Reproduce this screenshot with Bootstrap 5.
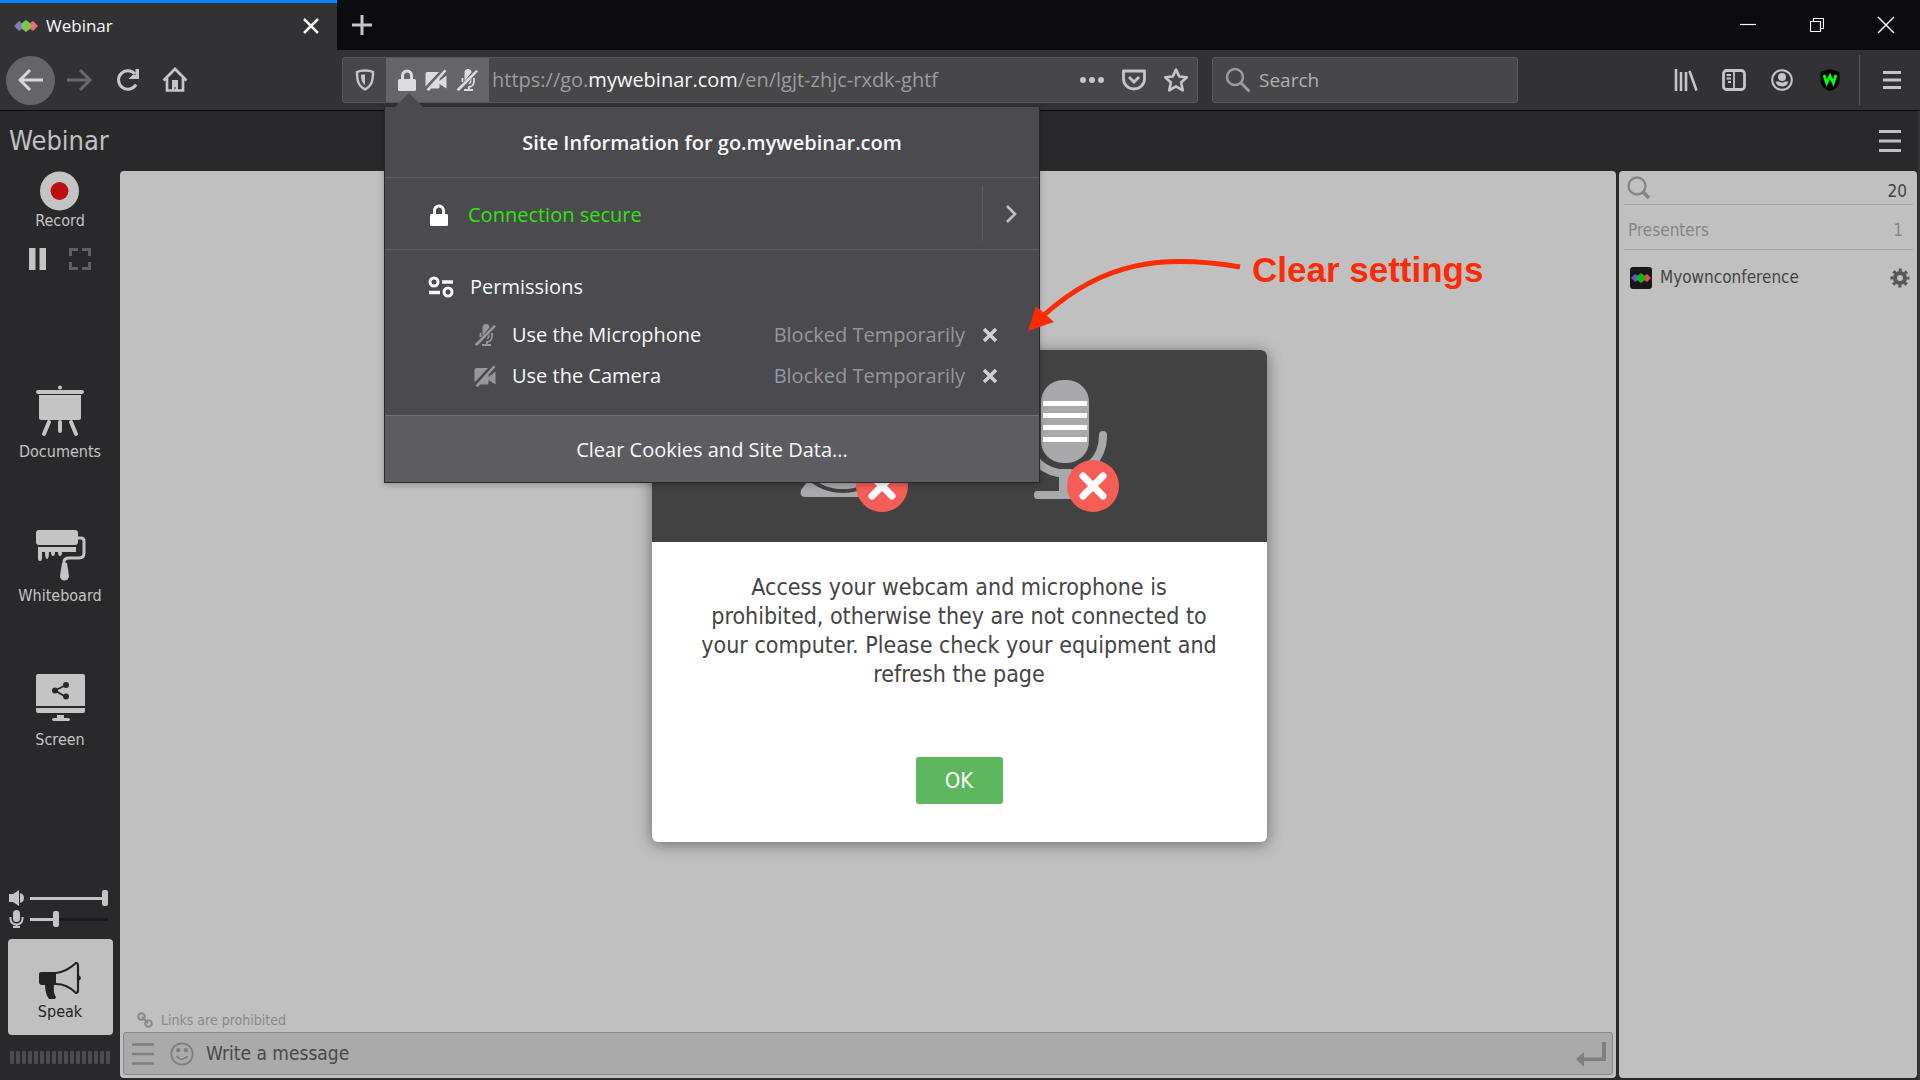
<!DOCTYPE html>
<html lang="en">
<head>
<meta charset="utf-8">
<meta name="viewport" content="width=device-width, initial-scale=1">
<title>Webinar</title>
<link href="https://cdn.jsdelivr.net/npm/bootstrap@5.3.0/dist/css/bootstrap.min.css" rel="stylesheet">
<style>
  :root { --chrome: "Open Sans", "Noto Sans", sans-serif; --page: "DejaVu Sans Condensed", "Noto Sans", sans-serif; }
  body { font-family: var(--chrome); background: #29292b; color: #f9f9fa; overflow: hidden; }
  button { background: none; border: 0; padding: 0; color: inherit; }
  svg { display: block; flex: none; }
  .ico { fill: none; stroke: currentColor; stroke-width: 2; }
  .solid { fill: currentColor; }

  /* browser chrome */
  .tab-strip { height: 50px; background: #0c0c10; }
  .tab-item { width: 337px; background: #323234; border-top: 3px solid #0a84ff; padding: 0 16px 2px 14px; font-size: 17px; }
  .win-btn { width: 69px; display: flex; justify-content: center; }
  .tool-strip { height: 61px; background: #323234; border-bottom: 1px solid #0c0c0d; color: #c6c6c8; padding: 0 4px 0 6px; }
  .nav-btn { width: 48px; height: 48px; display: flex; align-items: center; justify-content: center; }
  .nav-back { width: 49px; height: 49px; border-radius: 50%; background: #656567; color: #d8d8da; }
  .url-field, .find-field { height: 46px; background: #474749; border: 1px solid #58585a; border-radius: 3px; }
  .url-field { width: 856px; margin-left: 143px; }
  .find-field { width: 306px; margin-left: 14px; padding-left: 12px; gap: 6px; }
  .find-field input { background: none; border: 0; outline: 0; color: #b1b1b3; width: 100%; font-size: 19px; }
  input::placeholder { color: inherit; opacity: 1; }
  .shield-cell { width: 43px; display: flex; align-items: center; justify-content: center; }
  .ident-cell { width: 103px; background: #656567; color: #dcdcde; gap: 9px; padding-left: 12px; }
  .url-text { color: #9c9c9e; font-size: 20px; padding-left: 3px; outline: 0; }
  .url-text b { color: #f9f9fa; font-weight: 400; }
  .tool-sep { width: 1px; height: 50px; background: #5c5c5e; margin: 0 8px 0 5px; }

  /* site information panel */
  .site-panel { position: absolute; left: -2px; top: 49px; width: 656px; z-index: 20; background: #4a4a4f; border: 1px solid #2a2a2e; border-top: 0; box-shadow: 0 2px 6px rgba(0,0,0,.25); font-size: 20px; color: #f9f9fa; cursor: default; }
  .site-panel::before { content: ""; position: absolute; left: 10px; top: -14px; border: 14px solid transparent; border-top: 0; border-bottom-color: #4a4a4f; }
  .panel-title { height: 71px; font-size: 20px; font-weight: 600; padding-top: 2px; border-bottom: 1px solid #5f5f64; margin: 0; }
  .conn-row { height: 72px; border-bottom: 1px solid #5f5f64; padding: 8px 0; color: #30e60b; }
  .conn-main { padding: 2px 0 0 45px; gap: 20px; }
  .conn-row .go-cell { width: 57px; border-left: 1px solid #5b5b60; color: #c0c0c3; }
  .perm-box { padding: 18px 40px 18px 43px; min-height: 165px; }
  .perm-row { height: 41px; padding-left: 46px; }
  .perm-state { color: #97979b; }
  .clear-btn { height: 67px; width: 100%; background: #5d5d61; border-top: 1px solid #707075; padding-top: 2px; }

  /* webinar page */
  .room { font-family: var(--page); color: #c0c0c1; border-right: 2px solid #343537; }
  .room-head { height: 60px; padding: 0 17px 0 9px; }
  .room-title { font-size: 27px; margin: 0; }
  .side-rail { width: 120px; font-size: 16px; line-height: 20px; color: #c4c4c5; }
  .rail-tools { margin: 17px 0 115px; gap: 23px; }
  .rail-btn { height: 144px; gap: 5px; }
  .pane { background: #c0c0c1; border-radius: 4px; margin-bottom: 2px; }
  .users-pane { width: 298px; margin-left: 3px; color: #444; padding: 0 4px 0 5px; font-size: 17px; margin-right: 1px; }
  .users-find { height: 34px; border-bottom: 1px solid #a6a6a7; padding: 0 6px 0 3px; }
  .users-find input { background: none; border: 0; outline: 0; min-width: 0; }
  .users-group { height: 45px; border-bottom: 1px solid #a6a6a7; color: #858586; padding: 7px 10px 0 4px; }
  .user-row { height: 55px; padding: 0 3px 0 6px; }
  .links-note { font-size: 14px; color: #89898a; padding-left: 17px; height: 24px; }
  .msg-field { height: 43px; margin: 0 3px 3px; background: #aaaaab; border: 1px solid #88888a; border-radius: 3px; color: #7f7f81; padding: 0 6px 0 8px; }
  .msg-field input { background: none; border: 0; outline: 0; color: #48484a; font-size: 19px; }
  .levels { padding: 0 0 11px 9px; }
  .levels label { gap: 6px; }
  .level { -webkit-appearance: none; appearance: none; width: 78px; height: 16px; background: none; margin: 0; }
  .level::-webkit-slider-runnable-track { height: 3px; background: linear-gradient(90deg, #c4c4c5 var(--v), #1c1c1e var(--v)); }
  .level::-webkit-slider-thumb { -webkit-appearance: none; width: 6px; height: 16px; margin-top: -7px; border-radius: 2px; background: #c4c4c5; }
  .speak-btn { width: 105px; height: 96px; background: #c0c0c1; border-radius: 4px; color: #232325; padding-top: 10px; }
  .meter { height: 13px; gap: 2px; }
  .meter i { width: 4px; background: #4c4c4e; border-radius: 1px; }

  /* device warning */
  .dim-layer { position: absolute; inset: 0; pointer-events: none; z-index: 5; }
  .warn-box { width: 615px; border-radius: 6px; background: #fff; color: #444; box-shadow: 0 2px 16px rgba(0,0,0,.45); pointer-events: auto; }
  .warn-head { height: 192px; background: #434243; border-radius: 6px 6px 0 0; }
  .warn-body { padding: 31px 44px 38px; font-size: 23px; line-height: 29px; }
  .warn-body p { margin: 0 0 68px; }
  .ok-btn { width: 87px; height: 47px; background: #5cb75f; color: #fff; border-radius: 3px; font-size: 22px; }
  .tip-layer { position: absolute; left: 1024px; top: 135px; z-index: 30; color: #fb2c05; }
  .tip-text { font: 700 35px/40px "Liberation Sans", Arial, sans-serif; padding-left: 10px; }
</style>
<script src="https://cdn.jsdelivr.net/npm/bootstrap@5.3.0/dist/js/bootstrap.bundle.min.js"></script>
</head>
<body class="vh-100 d-flex flex-column">
<svg width="0" height="0" class="position-absolute" aria-hidden="true">
  <symbol id="camoff" viewBox="0 0 22 22"><path fill="currentColor" d="M2 3h12L.500 17.500V4.500A1.500 1.500 0 0 1 2 3zM1.500 20.500 19.500.5l2 1.500L14.500 10v2l7-5.500v13l-7-4.500v3a1.500 1.500 0 0 1-1.500 1.500H6L4 22z"/></symbol>
  <symbol id="micoff" viewBox="0 0 22 22"><path fill="currentColor" d="M12 0a3.500 3.500 0 0 1 3.500 3.500L8.500 12V3.500A3.500 3.500 0 0 1 12 0zM20 1l2 1.600L3 22l-2.500-1.400zM15.500 9v3a3.500 3.500 0 0 1-3 3.400z"/><path fill="none" stroke="currentColor" stroke-width="1.800" d="M6.500 9v4M18 9v3c0 4-2.500 6-5 6v3M8 21h9"/></symbol>
  <symbol id="lock" viewBox="0 0 18 22"><path fill="none" stroke="currentColor" stroke-width="3" d="M4.500 11V6.500a4.500 4.500 0 0 1 9 0V11"/><rect y="10" width="18" height="12" rx="1.500" fill="currentColor"/></symbol>
</svg>

<header>
  <div class="tab-strip d-flex">
    <div class="tab-item d-flex align-items-center">
      <svg width="24" height="14" viewBox="0 0 24 14"><path fill="#8377c0" d="M0 7l5-5 4 3v4l-4 3z"/><path fill="#ee7074" d="M24 7l-5-5-4 3v4l4 3z"/><path fill="#78c850" d="M12 1l4 3 1 3-1 3-4 3-4-3-1-3 1-3z"/></svg>
      <span class="ms-2 flex-grow-1">Webinar</span>
      <button aria-label="Close tab"><svg class="ico" width="20" height="20" viewBox="0 0 20 20"><path d="M3 3l14 14M17 3 3 17" stroke-width="2.500"/></svg></button>
    </div>
    <button class="px-2 ms-1" aria-label="New tab"><svg class="ico" width="26" height="26" viewBox="0 0 26 26"><path d="M13 3v20M3 13h20" stroke="#c6c6c8" stroke-width="3"/></svg></button>
    <div class="ms-auto d-flex align-items-center">
      <button class="win-btn" aria-label="Minimize"><svg class="ico" width="16" height="16" viewBox="0 0 16 16"><path d="M0 7.500h16" stroke-width="1.200"/></svg></button>
      <button class="win-btn" aria-label="Restore"><svg class="ico" width="14" height="14" viewBox="0 0 14 14"><path d="M.5 3.500h10v10H.5zM3.500 3V.5h10v10H11" stroke-width="1.200"/></svg></button>
      <button class="win-btn" aria-label="Close window"><svg class="ico" width="18" height="18" viewBox="0 0 18 18"><path d="M1 1l16 16M17 1 1 17" stroke-width="1.500"/></svg></button>
    </div>
  </div>

  <nav class="tool-strip d-flex align-items-center">
    <button class="nav-btn nav-back" aria-label="Back"><svg class="ico" width="26" height="24" viewBox="0 0 26 24"><path d="M25 12H3M12 2 2 12l10 10" stroke-width="3"/></svg></button>
    <button class="nav-btn" aria-label="Forward"><svg class="ico" width="26" height="24" viewBox="0 0 26 24"><path d="M1 12h22M14 2l10 10-10 10" stroke="#6a6a6c" stroke-width="3"/></svg></button>
    <button class="nav-btn" aria-label="Reload"><svg class="ico" width="24" height="24" viewBox="0 0 24 24"><path d="M21 16.500A9.300 9.300 0 1 1 20 6" stroke-width="3"/><path class="solid" stroke="none" d="M24 1v10H13.500l4-4h3V1z"/></svg></button>
    <button class="nav-btn" aria-label="Home"><svg class="ico" width="26" height="26" viewBox="0 0 26 26"><path d="M1.500 13.500 13 2l11.500 11.500M5 11v12.500h16V11" stroke-width="2.700"/><path class="solid" stroke="none" d="M10 13h6v11h-2.500v-4h-1v4H10z"/></svg></button>

    <div class="url-field d-flex">
      <button class="shield-cell" aria-label="Tracking protection"><svg class="ico" width="20" height="22" viewBox="0 0 20 22"><path d="M10 1.500c3 0 6 .5 8 1.500 0 8-1 14-8 17.300C3 17 2 11 2 3c2-1 5-1.500 8-1.500z" stroke-width="2.400"/><path class="solid" stroke="none" d="M10 5.500v10.500C7 14 6 11 6 6c1-.4 2.500-.5 4-.5z"/></svg></button>
      <div class="position-relative d-flex">
        <button class="ident-cell d-flex align-items-center" aria-label="Site information"><svg width="18" height="22"><use href="#lock"/></svg><svg width="22" height="22"><use href="#camoff"/></svg><svg width="22" height="22"><use href="#micoff"/></svg></button>
        <section class="site-panel">
          <h1 class="panel-title d-flex align-items-center justify-content-center">Site Information for go.mywebinar.com</h1>
          <div class="conn-row d-flex align-items-stretch">
            <div class="conn-main d-flex align-items-center flex-grow-1"><svg class="text-white" width="18" height="22"><use href="#lock"/></svg><span>Connection secure</span></div>
            <button class="go-cell d-flex align-items-center justify-content-center" aria-label="Connection details"><svg class="ico" width="12" height="20" viewBox="0 0 12 20"><path d="M2 2l8 8-8 8" stroke-width="2.600"/></svg></button>
          </div>
          <div class="perm-box">
            <div class="d-flex align-items-center mb-2 pb-1 pt-1"><svg class="ico me-3" width="26" height="22" viewBox="0 0 26 22"><circle cx="6" cy="6" r="4" stroke-width="3"/><path d="M14 6h11M1 16.500h11" stroke-width="3.500"/><circle cx="20" cy="16" r="4" stroke-width="3"/></svg>Permissions</div>
            <div class="perm-row d-flex align-items-center"><svg class="perm-state me-3" width="22" height="22"><use href="#micoff"/></svg><span class="flex-grow-1">Use the Microphone</span><span class="perm-state me-3">Blocked Temporarily</span><button aria-label="Clear microphone permission"><svg class="ico" width="18" height="18" viewBox="0 0 18 18"><path d="M3 3l12 12M15 3 3 15" stroke="#d0d0d2" stroke-width="3.500"/></svg></button></div>
            <div class="perm-row d-flex align-items-center"><svg class="perm-state me-3" width="22" height="22"><use href="#camoff"/></svg><span class="flex-grow-1">Use the Camera</span><span class="perm-state me-3">Blocked Temporarily</span><button aria-label="Clear camera permission"><svg class="ico" width="18" height="18" viewBox="0 0 18 18"><path d="M3 3l12 12M15 3 3 15" stroke="#d0d0d2" stroke-width="3.500"/></svg></button></div>
          </div>
          <button class="clear-btn">Clear Cookies and Site Data...</button>
        </section>
      </div>
      <div class="url-text d-flex align-items-center flex-grow-1" role="textbox" aria-label="Address" contenteditable="true" spellcheck="false"><span>https://go.<b>mywebinar.com</b>/en/lgjt-zhjc-rxdk-ghtf</span></div>
      <div class="d-flex align-items-center gap-3 pe-2">
        <button aria-label="Page actions"><svg class="solid" width="26" height="8" viewBox="0 0 26 8"><circle cx="4" cy="4" r="3"/><circle cx="13" cy="4" r="3"/><circle cx="22" cy="4" r="3"/></svg></button>
        <button aria-label="Save to Pocket"><svg class="ico" width="26" height="24" viewBox="0 0 26 24"><path d="M2.500 3h21v8a10.500 10 0 0 1-21 0z" stroke-width="2.800" stroke-linejoin="round"/><path d="M8 9l5 5 5-5" stroke-width="2.800"/></svg></button>
        <button aria-label="Bookmark"><svg class="ico" width="26" height="26" viewBox="0 0 26 26"><path d="M13 2.500l3.200 7 7.600.8-5.700 5.200 1.700 7.800L13 19.400l-6.800 3.900 1.700-7.800-5.700-5.200 7.600-.8z" stroke-width="2.600" stroke-linejoin="round"/></svg></button>
      </div>
    </div>
    <label class="find-field d-flex align-items-center"><svg class="ico" width="26" height="26" viewBox="0 0 26 26"><circle cx="10" cy="10" r="8" stroke="#9a9a9c" stroke-width="2.500"/><path d="M16 16l8.500 8.500" stroke="#9a9a9c" stroke-width="3"/></svg><input type="text" placeholder="Search" aria-label="Search"></label>

    <div class="ms-auto d-flex align-items-center">
      <button class="nav-btn" aria-label="Library"><svg class="ico" width="24" height="22" viewBox="0 0 24 22"><path d="M2 0v22M7 3v19M12 3v19M15.500 2l7 19.500" stroke-width="2.600"/></svg></button>
      <button class="nav-btn" aria-label="Sidebar"><svg class="ico" width="24" height="22" viewBox="0 0 24 22"><rect x="1.500" y="1.500" width="21" height="19" rx="3" stroke-width="2.800"/><path d="M12 2v18M4.500 6h4.500M4.500 9.500h4.500M6 13h3" stroke-width="1.800"/></svg></button>
      <button class="nav-btn" aria-label="Account"><svg class="ico" width="22" height="22" viewBox="0 0 22 22"><circle cx="11" cy="11" r="9.800"/><circle class="solid" cx="11" cy="8" r="4" stroke="none"/><path class="solid" stroke="none" d="M4.500 12.500h3.500q3 2 6 0h3.500q-1.500 5-6.500 5t-6.500-5z"/></svg></button>
      <button class="nav-btn" aria-label="Shield extension"><svg width="20" height="22" viewBox="0 0 20 22"><path fill="#050505" d="M10 0l9.500 3v9c0 5-5 9-9.500 10C5.500 21 .5 17 .5 12V3z"/><path fill="none" stroke="#0f1" stroke-width="2.800" d="M4 6l2.700 8L10 7l3.300 7L16 6"/></svg></button>
      <span class="tool-sep"></span>
      <button class="nav-btn" aria-label="Menu"><svg class="ico" width="18" height="20" viewBox="0 0 18 20"><path d="M0 2.500h18M0 10h18M0 17.500h18" stroke-width="2.800"/></svg></button>
    </div>
  </nav>
</header>

<main class="room position-relative flex-grow-1 d-flex flex-column">
  <div class="room-head d-flex align-items-center justify-content-between">
    <h2 class="room-title">Webinar</h2>
    <button aria-label="Room menu"><svg class="ico" width="22" height="22" viewBox="0 0 22 22"><path d="M0 1.500h22M0 11h22M0 20.500h22" stroke-width="2.800"/></svg></button>
  </div>
  <div class="d-flex flex-grow-1">
    <aside class="side-rail d-flex flex-column align-items-center">
      <button class="d-flex flex-column align-items-center"><svg width="39" height="40" viewBox="0 0 39 40"><circle cx="19.500" cy="20" r="19.500" fill="#c4c4c5"/><circle cx="19.500" cy="20" r="9" fill="#bd0f10"/></svg>Record</button>
      <div class="rail-tools d-flex"><button aria-label="Pause"><svg class="solid" width="17" height="22" viewBox="0 0 17 22"><path d="M0 0h6.500v22H0zM10.500 0H17v22h-6.500z"/></svg></button><button aria-label="Full screen"><svg class="ico" width="22" height="22" viewBox="0 0 22 22"><path d="M1.500 8V1.500H9M13 1.500h7.500V8M20.500 14v6.500H13M9 20.500H1.500V14" stroke="#606062" stroke-width="3"/></svg></button></div>
      <button class="rail-btn d-flex flex-column align-items-center"><svg width="52" height="52" viewBox="0 0 52 52" class="solid"><circle cx="26" cy="2.500" r="2"/><rect x="2" y="5" width="48" height="4" rx="2"/><path d="M5 10h42v23a2 2 0 0 1-2 2H7a2 2 0 0 1-2-2z"/><path d="M15 37l-5 12M26 37v9M37 37l5 12" stroke="currentColor" stroke-width="4" stroke-linecap="round"/></svg>Documents</button>
      <button class="rail-btn d-flex flex-column align-items-center"><svg width="52" height="52" viewBox="0 0 52 52" class="solid"><rect x="2" y="1" width="42" height="15" rx="3"/><path d="M4 18h38v5H28q0 4-2 4t-2-4h-3q0 4-2 4t-2-4h-2q0 7-2 7t-2-7h-3v7q0 2-2 2t-2-2z"/><path class="ico" d="M44 9h3q3 0 3 3v12q0 5-5 5H35q-5 0-5 4v4" style="stroke-width:3"/><path d="M28 34h5l2 13a4.500 4.500 0 0 1-9 0z"/></svg>Whiteboard</button>
      <button class="rail-btn d-flex flex-column align-items-center"><svg width="52" height="52" viewBox="0 0 52 52" class="solid"><path d="M2 3a2 2 0 0 1 2-2h45a2 2 0 0 1 2 2v30H2zM2 35h49v3a2 2 0 0 1-2 2H4a2 2 0 0 1-2-2zM23 42h7v3h4q2 0 2 1.500t-2 1.500H20q-2 0-2-1.500t2-1.500h3z"/><path d="M32 12 21 17.500 32 24" fill="none" stroke="#29292b" stroke-width="1.800"/><g fill="#29292b"><circle cx="32" cy="12" r="3"/><circle cx="21" cy="17.500" r="3"/><circle cx="32" cy="23.500" r="3"/></g></svg>Screen</button>
      <div class="levels mt-auto align-self-start d-flex flex-column gap-1">
        <label class="d-flex align-items-center"><svg class="solid" width="15" height="16" viewBox="0 0 15 16"><path d="M0 4h4l6-4v16l-6-4H0zM11 3q4 1 4 5t-4 5z"/></svg><input class="level" style="--v:100%" type="range" value="100" aria-label="Volume"></label>
        <label class="d-flex align-items-center"><svg width="15" height="18" viewBox="0 0 15 18"><rect class="solid" x="4" width="7" height="12" rx="3.500"/><path class="ico" d="M1.500 7v2a6 5.500 0 0 0 12 0V7M7.500 14.500V17M4 17h7"/></svg><input class="level" style="--v:32%" type="range" value="32" aria-label="Microphone level"></label>
      </div>
      <button class="speak-btn d-flex flex-column align-items-center justify-content-center"><svg width="44" height="40" viewBox="0 0 44 40"><path fill="currentColor" d="M1 12q0-2 2-2h15v13H4q-3 0-3-3zM7 22h9q-1 9 2 13l-1 2H11q-4-5-4-15zM40 13q3 1 3 3t-3 3z"/><path fill="none" stroke="currentColor" stroke-width="2.200" d="M18 11q10-1 20-10 2 0 2 3v24q0 3-2 3-9-9-20-9"/></svg>Speak</button>
      <div class="meter d-flex my-3" id="meter"></div>
    </aside>

    <section class="pane flex-grow-1 d-flex flex-column justify-content-end">
      <div class="links-note d-flex align-items-center gap-2"><svg class="ico" width="16" height="16" viewBox="0 0 16 16"><circle cx="4.500" cy="4.500" r="3.300"/><circle cx="11.500" cy="11.500" r="3.300"/><path d="M5 5l6 6"/></svg>Links are prohibited</div>
      <div class="msg-field d-flex align-items-center">
        <button aria-label="Chat menu"><svg class="ico" width="22" height="22" viewBox="0 0 22 22"><path d="M0 1.500h22M0 11h22M0 20.500h22" stroke-width="2.400"/></svg></button>
        <button class="ms-3" aria-label="Emoji"><svg class="ico" width="24" height="24" viewBox="0 0 22 22"><circle cx="11" cy="11" r="9.800" stroke-width="1.600"/><path d="M6 13q5 6 10 0" stroke-width="1.600"/><circle class="solid" cx="7.500" cy="7.500" r="1"/><circle class="solid" cx="14.500" cy="7.500" r="1"/></svg></button>
        <input class="flex-grow-1 ms-2 ps-1" type="text" placeholder="Write a message" aria-label="Message">
        <button aria-label="Send"><svg width="30" height="24" viewBox="0 0 30 24"><path fill="currentColor" d="M26 0h4v19H8v6L0 17l8-7v5.500h18z"/></svg></button>
      </div>
    </section>

    <aside class="pane users-pane">
      <label class="users-find d-flex align-items-center"><svg class="ico" width="24" height="24" viewBox="0 0 24 24"><circle cx="10" cy="10" r="8.500" stroke="#858586" stroke-width="2.400"/><path d="M16 16l6 6" stroke="#858586" stroke-width="3.500"/></svg><input class="flex-grow-1" type="text" aria-label="Find participant"><span class="pt-2">20</span></label>
      <div class="users-group d-flex align-items-center justify-content-between"><span>Presenters</span><span>1</span></div>
      <div class="user-row d-flex align-items-center"><svg width="22" height="22" viewBox="0 0 22 22"><rect width="22" height="22" rx="3" fill="#171719"/><path fill="#6a4fd0" d="M1 11l4-4 3 2v4l-3 2z"/><path fill="#f04850" d="M21 11l-4-4-3 2v4l3 2z"/><path fill="#12b80c" d="M11 6l4 3 1 2-1 2-4 3-4-3-1-2 1-2z"/></svg><span class="flex-grow-1 ms-2">Myownconference</span><button aria-label="Presenter settings"><svg width="20" height="20" viewBox="0 0 20 20"><circle cx="10" cy="10" r="5" fill="none" stroke="#58585a" stroke-width="4"/><circle cx="10" cy="10" r="8" fill="none" stroke="#58585a" stroke-width="3" stroke-dasharray="3.140 3.140" stroke-dashoffset="1.570"/></svg></button></div>
    </aside>
  </div>

  <div class="dim-layer d-flex align-items-center justify-content-center">
    <div class="warn-box text-center" role="dialog" aria-label="Device access">
      <div class="warn-head d-flex justify-content-center">
        <svg width="615" height="191" viewBox="0 0 615 191"><g fill="#a9a8aa"><path d="M155 132h90v15h-92q-6 0-4-7z"/><circle cx="191" cy="90" r="48"/><rect x="389" y="30" width="48" height="83" rx="22"/><path d="M407 119h12v22h16v8h-50q-3 0-3-4t3-4h22z"/></g><circle cx="191" cy="90" r="51" fill="none" stroke="#434243" stroke-width="4"/><path d="M375 85c0 50 76 53 76 0" fill="none" stroke="#a9a8aa" stroke-width="8" stroke-linecap="round"/><path d="M391 53.500h44M391 65.500h44M391 77.500h44M391 89.500h44" stroke="#fff" stroke-width="5"/><g fill="#f55d56"><circle cx="230" cy="136" r="26"/><circle cx="441" cy="136" r="26"/></g><path d="M220 126l20 20M240 126l-20 20M431 126l20 20M451 126l-20 20" stroke="#fff" stroke-width="7" stroke-linecap="round"/></svg>
      </div>
      <div class="warn-body">
        <p>Access your webcam and microphone is prohibited, otherwise they are not connected to your computer. Please check your equipment and refresh the page</p>
        <button class="ok-btn">OK</button>
      </div>
    </div>
  </div>
  <div class="tip-layer d-flex align-items-start">
    <svg width="218" height="90" viewBox="0 0 218 90"><path d="M216 21C140 8 80 15 20 69" fill="none" stroke="currentColor" stroke-width="5"/><path fill="currentColor" d="M4 85 12 60l18 16z"/></svg>
    <span class="tip-text pt-1">Clear settings</span>
  </div>
</main>
<script>
  document.getElementById('meter').innerHTML = '<i></i>'.repeat(17);
</script>
</body>
</html>
